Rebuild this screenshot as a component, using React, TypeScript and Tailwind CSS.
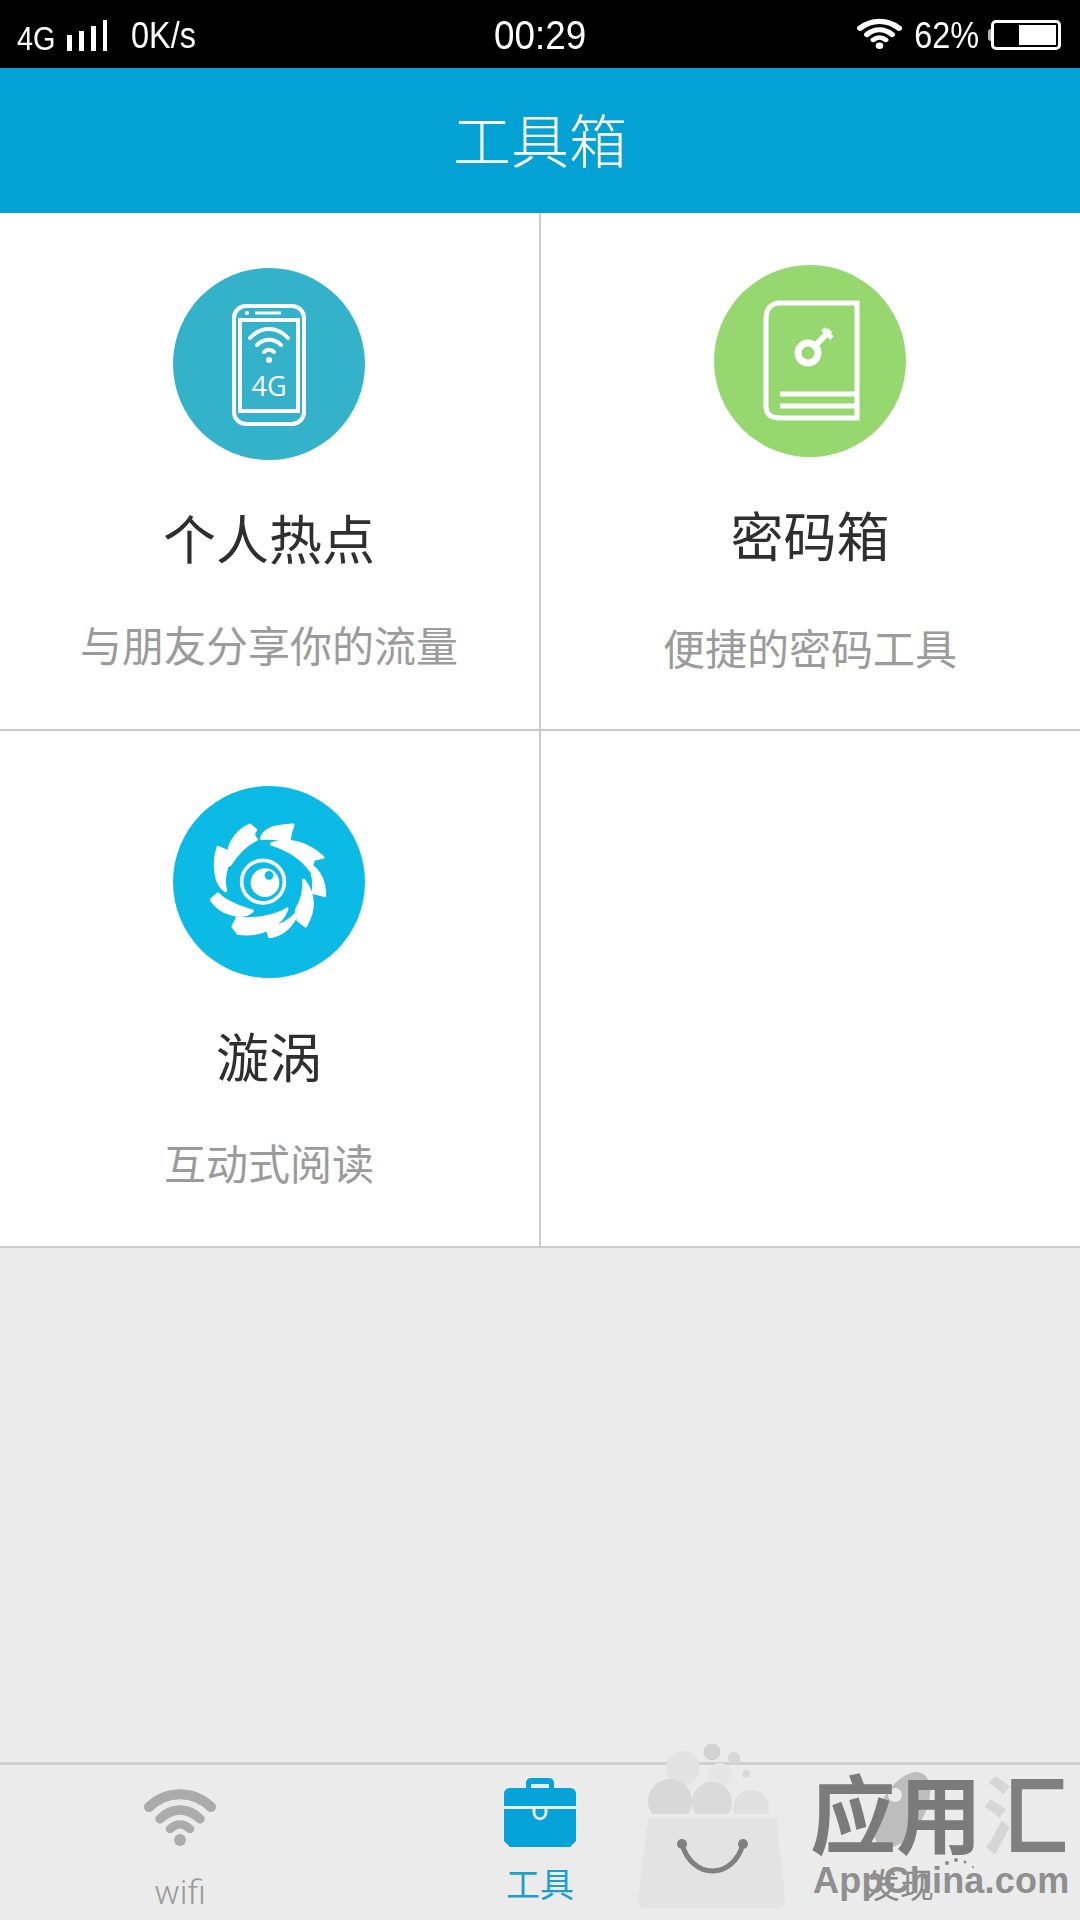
const cjk = "font-['Noto_Sans_CJK_SC','Liberation_Sans',sans-serif]";

function WifiGlyph({ className, color, width, height }: { className?: string; color: string; width: number; height: number }) {
  return (
    <svg viewBox="0 0 72 58" preserveAspectRatio="none" className={className} style={{ width, height }} fill="none" stroke={color} strokeLinecap="round">
      <path d="M5 19C23 2 49 2 67 19" strokeWidth="10" />
      <path d="M16 31C28 19 44 19 56 31" strokeWidth="9.5" />
      <path d="M26 41C32 35 40 35 46 41" strokeWidth="8.5" />
      <circle cx="36" cy="52" r="6" fill={color} stroke="none" />
    </svg>
  );
}

function StatusBar() {
  return (
    <div className="grid h-[68px] shrink-0 grid-cols-[1fr_auto_1fr] items-center bg-black pt-[2px] text-white font-['Liberation_Sans',sans-serif]">
      <div className="flex items-center pl-[17px]">
        <span className="mt-[5px] origin-left scale-x-[0.85] text-[34px] leading-none">4G</span>
        <div className="ml-[5px] flex items-end gap-[7px]">
          <span className="h-[16px] w-[5px] bg-white" />
          <span className="h-[20px] w-[5px] bg-white" />
          <span className="h-[25px] w-[5px] bg-white" />
          <span className="h-[31px] w-[4px] bg-white" />
        </div>
        <span className="ml-[24px] mt-[1px] origin-left scale-x-90 text-[36px] leading-none">0K/s</span>
      </div>
      <span className="scale-x-[0.92] text-[40px] leading-none">00:29</span>
      <div className="flex items-center justify-end pr-[19px]">
        <WifiGlyph className="mb-[4px]" color="#ffffff" width={45} height={31} />
        <span className="ml-[5px] mt-[1px] origin-right scale-x-90 text-[36px] leading-none">62%</span>
        <span className="ml-[9px] h-[12px] w-[3px] rounded-l-sm bg-white/70" />
        <div className="flex h-[30px] w-[70px] justify-end rounded-[5px] border-[3px] border-white p-[2px]">
          <div className="h-full w-[37px] bg-white" />
        </div>
      </div>
    </div>
  );
}

function PhoneIcon() {
  return (
    <svg viewBox="0 0 192 192" className="h-full w-full" fill="none" stroke="#ffffff">
      <rect x="61" y="38" width="70" height="118" rx="12" strokeWidth="4" />
      <rect x="67" y="52" width="58" height="91" strokeWidth="4" />
      <circle cx="74" cy="45" r="2" fill="#ffffff" stroke="none" />
      <path d="M82 45H108" strokeWidth="3" />
      <path d="M77 70C88 58 104 58 115 70" strokeWidth="4" strokeLinecap="round" />
      <path d="M84 77C91 70 101 70 108 77" strokeWidth="4" strokeLinecap="round" />
      <path d="M91 84C94 81 98 81 101 84" strokeWidth="4" strokeLinecap="round" />
      <circle cx="96" cy="92" r="3" fill="#ffffff" stroke="none" />
      <text x="96" y="128" textAnchor="middle" fill="#ffffff" stroke="none" fontSize="27" fontFamily="Open Sans, sans-serif">4G</text>
    </svg>
  );
}

function BookIcon() {
  return (
    <svg viewBox="0 0 192 192" className="h-full w-full" fill="none" stroke="#ffffff" strokeWidth="5">
      <path d="M143 38H66C57 38 52 44 52 54V141C52 149 57 153 66 153H143Z" />
      <path d="M66 129H141M66 141H141" strokeWidth="5" />
      <circle cx="94" cy="88" r="10" strokeWidth="7" />
      <path d="M102 80L116 65" strokeWidth="6" />
      <path d="M109 64L118 73" strokeWidth="5" />
    </svg>
  );
}

// blades traced from the reference at 3x, hence the scale
function SwirlIcon() {
  const blades = [
    'M240 285C225 235 255 185 300 165L318 180C308 192 312 200 320 208C285 225 262 250 240 285Z',
    'M335 205C345 172 385 168 430 165L422 190L418 214C390 205 360 204 335 205Z',
    'M365 222C420 200 480 225 520 262L492 268L482 300C455 262 415 238 365 222Z',
    'M480 285C512 300 525 340 525 377L490 368C495 340 490 310 480 285Z',
    'M462 330C500 380 490 430 468 468L445 450C445 440 448 430 440 420C455 395 465 365 462 330Z',
    'M412 417C380 438 320 450 262 445L250 470L265 490C340 500 395 465 412 417Z',
    'M445 425C420 455 390 470 352 478L360 500C400 495 430 465 445 425Z',
    'M185 390L205 372C225 395 265 410 308 423C290 440 262 438 240 430C220 425 200 410 185 390Z',
    'M205 232L235 245L248 255C228 290 218 325 228 362C195 345 190 280 205 232Z',
  ];
  return (
    <svg viewBox="0 0 192 192" className="h-full w-full">
      <g transform="scale(0.3333) translate(-70 -48)">
        {blades.map(d => <path key={d} d={d} fill="#ffffff" stroke="#ffffff" strokeWidth="9" strokeLinejoin="round" />)}
        <circle cx="340" cy="335" r="64" fill="none" stroke="#ffffff" strokeWidth="11" />
        <circle cx="346" cy="338" r="43" fill="#ffffff" />
        <circle cx="358" cy="316" r="13" fill="#0bbbe5" />
      </g>
    </svg>
  );
}

function ToolCell({ color, icon, title, sub, top, subGap, border }: {
  color: string;
  icon: React.ReactNode;
  title: string;
  sub: string;
  top: string;
  subGap: string;
  border?: boolean;
}) {
  return (
    <div className={`flex flex-col items-center pr-[1px] ${top} ${border ? 'border-l-2 border-[#cbcbcb]' : ''}`}>
      <div className="h-[192px] w-[192px] rounded-full" style={{ backgroundColor: color }}>{icon}</div>
      <p className="mt-[42px] h-[70px] text-[53px] leading-[70px] text-[#2f2f2f]">{title}</p>
      <p className={`${subGap} h-[60px] text-[42px] leading-[60px] text-[#9b9b9b]`}>{sub}</p>
    </div>
  );
}

function Watermark() {
  return (
    <div className="pointer-events-none absolute bottom-0 left-[630px] h-[180px] w-[450px]">
      <svg viewBox="0 0 450 180" className="absolute left-0 top-0 h-[180px] w-[450px]">
        <circle cx="53" cy="28" r="17" fill="#e2e2e2" />
        <circle cx="82" cy="12" r="8.5" fill="#d2d2d2" />
        <circle cx="104" cy="18" r="6" fill="#d6d6d6" />
        <circle cx="116" cy="34" r="4" fill="#dadada" />
        <circle cx="90" cy="35" r="12" fill="#e6e6e6" />
        <path d="M22 74A22 22 0 1 1 58 74Z" fill="#d8d8d8" />
        <path d="M66 74A20 20 0 1 1 98 74Z" fill="#dadada" />
        <path d="M104 74A18 18 0 1 1 138 74Z" fill="#e0e0e0" />
        <path d="M18 78H147L155 160C155 166 151 169 146 169H16C11 169 8 166 8 160Z" fill="#e3e3e3" />
        <path d="M52 104C62 140 103 140 113 104" fill="none" stroke="#808080" strokeWidth="5" />
        <circle cx="52" cy="104" r="5" fill="#808080" />
        <circle cx="113" cy="104" r="5" fill="#808080" />
        <ellipse cx="272" cy="70" rx="22" ry="42" transform="rotate(30 272 70)" fill="#bdbdbd" />
        <circle cx="265" cy="55" r="7" fill="#ebebeb" />
        <circle cx="317" cy="123" r="2" fill="#8a8a8a" />
        <circle cx="326" cy="120" r="2" fill="#8a8a8a" />
        <circle cx="335" cy="122" r="1.5" fill="#8a8a8a" />
        <circle cx="343" cy="127" r="1" fill="#8a8a8a" />
      </svg>
      <span className="absolute left-[180px] top-[23px] flex text-[86px] font-bold leading-[96px] text-[#7b7b7b]">
        <span>应用</span>
        <span className="bg-[linear-gradient(90deg,#d6d6d6_34%,#808080_34%)] bg-clip-text text-transparent">汇</span>
      </span>
      <span className="absolute left-[183px] top-[119px] font-['Liberation_Sans',sans-serif] text-[36px] font-bold leading-[44px] tracking-[0.2px] text-[#8f8f8f]">
        AppChina.com
      </span>
    </div>
  );
}

export default function App() {
  return (
    <div className={`relative flex h-[1920px] w-[1080px] flex-col overflow-hidden bg-[#ebebeb] ${cjk}`}>
      <StatusBar />

      {/* Header */}
      <div className="flex h-[145px] shrink-0 items-center justify-center bg-[#03a1d4] pb-[4px] text-[58px] font-light text-white">
        工具箱
      </div>

      {/* Tools grid */}
      <div className="grid shrink-0 grid-cols-[539px_541px] grid-rows-[518px_517px] bg-white">
        <div className="grid border-b-2 border-[#cbcbcb]">
          <ToolCell color="#33b2c9" icon={<PhoneIcon />} title="个人热点" sub="与朋友分享你的流量" top="pt-[55px]" subGap="mt-[42px]" />
        </div>
        <div className="grid border-b-2 border-[#cbcbcb]">
          <ToolCell border color="#96d770" icon={<BookIcon />} title="密码箱" sub="便捷的密码工具" top="pt-[52px]" subGap="mt-[48px]" />
        </div>
        <div className="grid border-b-2 border-[#cbcbcb]">
          <ToolCell color="#0bbbe5" icon={<SwirlIcon />} title="漩涡" sub="互动式阅读" top="pt-[55px]" subGap="mt-[42px]" />
        </div>
        <div className="border-b-2 border-l-2 border-[#cbcbcb]" />
      </div>

      {/* Bottom nav */}
      <div className="mt-auto grid h-[158px] shrink-0 grid-cols-3 border-t-[3px] border-[#cfcfcf]">
        <div className="flex flex-col items-center">
          <WifiGlyph className="mt-[23px]" color="#ababab" width={72} height={58} />
          <span className="mt-[26px] font-['Roboto',sans-serif] text-[34px] font-light leading-[40px] text-[#9a9a9a]">wifi</span>
        </div>
        <div className="flex flex-col items-center">
          <svg viewBox="0 0 72 70" className="mt-[13px] w-[72px]">
            <path d="M22 10V5C22 2 24 0 27 0H45C48 0 50 2 50 5V10H45V6H27V10Z" fill="#05a3d7" />
            <path d="M6 10H66C70 10 72 13 72 16V28H0V16C0 13 2 10 6 10Z" fill="#05a3d7" />
            <path d="M0 31H72V63L66 69H6L0 63Z" fill="#05a3d7" />
            <path d="M30 30V34C30 43 42 43 42 34V30" fill="none" stroke="#ebebeb" strokeWidth="3" />
          </svg>
          <span className="mt-[13px] text-[34px] leading-[44px] text-[#1c9fcb]">工具</span>
        </div>
        <div className="flex flex-col items-center justify-end pb-[14px]">
          <span className="text-[34px] leading-[44px] text-[#8a8a8a]">发现</span>
        </div>
      </div>

      <Watermark />
    </div>
  );
}
